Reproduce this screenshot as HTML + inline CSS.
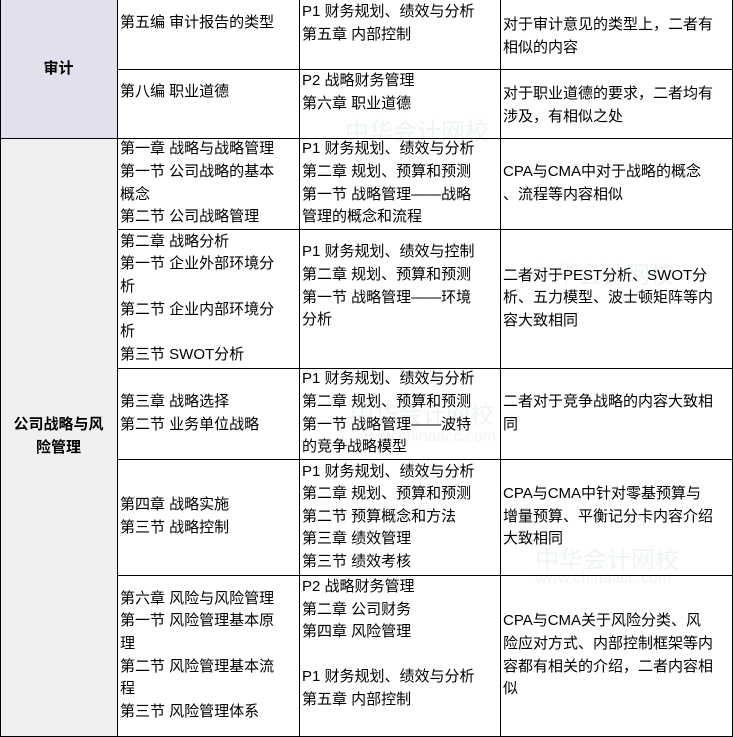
<!DOCTYPE html>
<html><head><meta charset="utf-8"><style>
body{margin:0;width:733px;height:737px;background:#fff;overflow:hidden;position:relative;font-family:"Liberation Sans","Noto Sans CJK SC",sans-serif;font-size:15px;color:#000}
.c{position:absolute;display:flex;align-items:center;line-height:22.6px;box-sizing:border-box;padding-left:3px;white-space:nowrap}
.h{justify-content:center;text-align:center;font-weight:bold;padding:0;white-space:normal}
.v{position:absolute;background:#000;width:1px}
.hl{position:absolute;background:#000;height:1px}
.wm{position:absolute;color:rgba(120,180,140,0.13);font-size:24px;white-space:nowrap}
.wm2{position:absolute;color:rgba(150,160,190,0.13);font-size:16px;white-space:nowrap}
</style></head><body>
<div style="position:absolute;left:0;top:0;width:117px;height:138px;background:#E4DFEC"></div>
<div style="position:absolute;left:0;top:138px;width:117px;height:599px;background:#F0F0F0"></div>

<div class="wm" style="left:345px;top:112px">中华会计网校</div>
<div class="wm" style="left:530px;top:255px">中华会计网校</div>
<div class="wm" style="left:350px;top:395px">中华会计网校</div>
<div class="wm2" style="left:360px;top:428px">www.chinaacc.com</div>
<div class="wm" style="left:535px;top:540px">中华会计网校</div>
<div class="wm2" style="left:535px;top:570px">www.chinaacc.com</div>

<div class="v" style="left:0;top:0;height:737px"></div>
<div class="v" style="left:117px;top:0;height:737px"></div>
<div class="v" style="left:299px;top:0;height:737px"></div>
<div class="v" style="left:500px;top:0;height:737px"></div>
<div class="v" style="left:732px;top:0;height:737px"></div>
<div class="hl" style="left:117px;top:69px;width:616px"></div>
<div class="hl" style="left:0;top:138px;width:733px"></div>
<div class="hl" style="left:117px;top:229px;width:616px"></div>
<div class="hl" style="left:117px;top:368px;width:616px"></div>
<div class="hl" style="left:117px;top:459px;width:616px"></div>
<div class="hl" style="left:117px;top:575px;width:616px"></div>
<div class="hl" style="left:0;top:736px;width:733px"></div>

<div class="c h" style="left:0;top:0;width:117px;height:138px">审计</div>
<div class="c h" style="left:0;top:138px;width:117px;height:598px">公司战略与风<br>险管理</div>

<div class="c" style="left:117px;top:0;width:182px;height:47px">第五编 审计报告的类型</div>
<div class="c" style="left:299px;top:1px;width:200px;height:46px">P1 财务规划、绩效与分析<br>第五章 内部控制</div>
<div class="c" style="left:500px;top:2px;width:233px;height:69px">对于审计意见的类型上，二者有<br>相似的内容</div>

<div class="c" style="left:117px;top:69px;width:182px;height:47px">第八编 职业道德</div>
<div class="c" style="left:299px;top:70px;width:200px;height:46px">P2 战略财务管理<br>第六章 职业道德</div>
<div class="c" style="left:500px;top:71px;width:233px;height:69px">对于职业道德的要求，二者均有<br>涉及，有相似之处</div>

<div class="c" style="left:117px;top:138px;width:182px;height:91px">第一章 战略与战略管理<br>第一节 公司战略的基本<br>概念<br>第二节 公司战略管理</div>
<div class="c" style="left:299px;top:138px;width:200px;height:91px">P1 财务规划、绩效与分析<br>第二章 规划、预算和预测<br>第一节 战略管理——战略<br>管理的概念和流程</div>
<div class="c" style="left:500px;top:138px;width:233px;height:91px">CPA与CMA中对于战略的概念<br>、流程等内容相似</div>

<div class="c" style="left:117px;top:229px;width:182px;height:139px">第二章 战略分析<br>第一节 企业外部环境分<br>析<br>第二节 企业内部环境分<br>析<br>第三节 SWOT分析</div>
<div class="c" style="left:299px;top:229px;width:200px;height:139px;padding-bottom:24px">P1 财务规划、绩效与控制<br>第二章 规划、预算和预测<br>第一节 战略管理——环境<br>分析</div>
<div class="c" style="left:500px;top:229px;width:233px;height:139px">二者对于PEST分析、SWOT分<br>析、五力模型、波士顿矩阵等内<br>容大致相同</div>

<div class="c" style="left:117px;top:368px;width:182px;height:91px">第三章 战略选择<br>第二节 业务单位战略</div>
<div class="c" style="left:299px;top:368px;width:200px;height:91px">P1 财务规划、绩效与分析<br>第二章 规划、预算和预测<br>第一节 战略管理——波特<br>的竞争战略模型</div>
<div class="c" style="left:500px;top:368px;width:233px;height:91px">二者对于竞争战略的内容大致相<br>同</div>

<div class="c" style="left:117px;top:459px;width:182px;height:116px">第四章 战略实施<br>第三节 战略控制</div>
<div class="c" style="left:299px;top:459px;width:200px;height:116px">P1 财务规划、绩效与分析<br>第二章 规划、预算和预测<br>第二节 预算概念和方法<br>第三章 绩效管理<br>第三节 绩效考核</div>
<div class="c" style="left:500px;top:459px;width:233px;height:116px">CPA与CMA中针对零基预算与<br>增量预算、平衡记分卡内容介绍<br>大致相同</div>

<div class="c" style="left:117px;top:575px;width:182px;height:161px">第六章 风险与风险管理<br>第一节 风险管理基本原<br>理<br>第二节 风险管理基本流<br>程<br>第三节 风险管理体系</div>
<div class="c" style="left:299px;top:575px;width:200px;height:140px;align-items:flex-start;padding-top:1px">P2 战略财务管理<br>第二章 公司财务<br>第四章 风险管理<br><br>P1 财务规划、绩效与分析<br>第五章 内部控制</div>
<div class="c" style="left:500px;top:575px;width:233px;height:161px">CPA与CMA关于风险分类、风<br>险应对方式、内部控制框架等内<br>容都有相关的介绍，二者内容相<br>似</div>
</body></html>
